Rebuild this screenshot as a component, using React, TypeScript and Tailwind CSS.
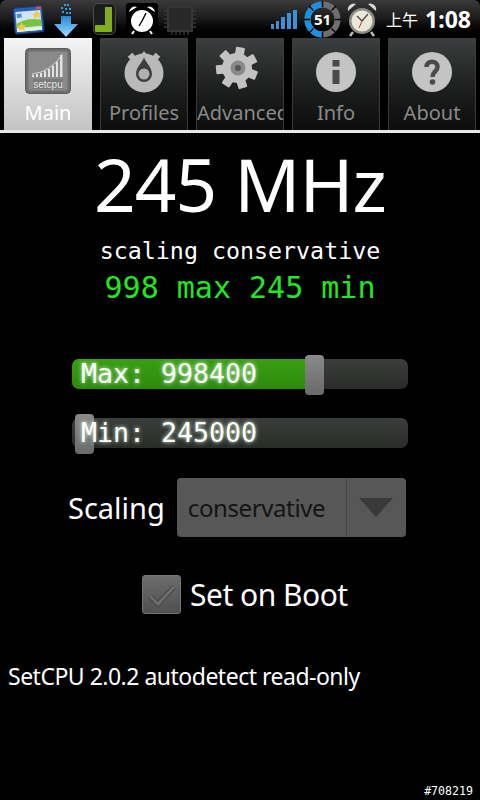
import React from 'react'

const sans = 'font-["Noto_Sans","Open_Sans",sans-serif]'
const mono = 'font-["DejaVu_Sans_Mono","Liberation_Mono",monospace]'

const GalleryIcon = () => (
  <svg width="33" height="33" viewBox="0 0 33 33" className="shrink-0">
    <g transform="rotate(-5 16 16)">
      <rect x="2" y="4" width="29" height="26" rx="2.5" fill="#2a5fb8" stroke="#163a78" />
      <rect x="4" y="8" width="25" height="20" fill="#cfe4f4" />
      <path d="M4 20 Q16 14 29 18 V24 H4 Z" fill="#7cc242" />
      <path d="M4 25 H29 V28 H4 Z" fill="#e8f2d8" />
      <rect x="5" y="10" width="5" height="4" fill="#4f8fd0" />
      <path d="M25 8 l1.5 3 3 .4-2.2 2 .6 3-2.9-1.5-2.9 1.5.6-3-2.2-2 3-.4z" fill="#f3c93c" />
      <path d="M9 19 l1.4 2.8 3 .4-2.2 2.1 .5 3-2.7-1.4-2.7 1.4 .5-3-2.2-2.1 3-.4z" fill="#f3c93c" />
      <rect x="25" y="4.5" width="5" height="2.5" fill="#d9534f" />
    </g>
  </svg>
)

const DownloadIcon = () => (
  <svg width="26" height="36" viewBox="0 0 26 36" className="shrink-0">
    <defs>
      <linearGradient id="dl" x1="0" y1="0" x2="0" y2="1">
        <stop offset="0" stopColor="#1e88d8" />
        <stop offset="1" stopColor="#a6dcff" />
      </linearGradient>
    </defs>
    <g fill="#2f9fe8">
      <rect x="11" y="3" width="2" height="2" />
      <rect x="14" y="3" width="2" height="2" />
      <rect x="8" y="6" width="2" height="2" />
      <rect x="12" y="7" width="2" height="2" />
      <rect x="16" y="7" width="2" height="2" />
      <rect x="9" y="10" width="2" height="2" />
      <rect x="13" y="11" width="2" height="2" />
      <rect x="16" y="11" width="2" height="2" />
    </g>
    <path d="M8 15 H18 V23 H25 L13 36 L1 23 H8 Z" fill="url(#dl)" />
  </svg>
)

const JIcon = () => (
  <svg width="23" height="32" viewBox="0 0 23 32" className="shrink-0">
    <rect x="0.5" y="0.5" width="22" height="31" rx="5" fill="#1c1c1c" stroke="#4a4a4a" />
    <rect x="12" y="4" width="7" height="24" fill="#7fae1f" />
    <rect x="2" y="22" width="17" height="7" rx="1" fill="#7fae1f" />
  </svg>
)

const AlarmWhite = () => (
  <svg width="32" height="32" viewBox="0 0 32 32" className="shrink-0">
    <rect width="32" height="32" rx="3" fill="#000" />
    <circle cx="16" cy="18" r="11" fill="#fff" />
    <path d="M3 9 A6 6 0 0 1 11 4 Z M29 9 A6 6 0 0 0 21 4 Z" fill="#fff" />
    <path d="M16 18 L20 10 M16 18 L13 23" stroke="#000" strokeWidth="1.4" />
    <path d="M8 28 L6 31 M24 28 L26 31" stroke="#fff" strokeWidth="2" />
  </svg>
)

const ChipIcon = () => (
  <svg width="32" height="32" viewBox="0 0 32 32" className="shrink-0">
    <rect x="4" y="4" width="24" height="24" fill="#282828" stroke="#363636" strokeWidth="2" />
    <path
      d="M8 0V4M12 0V4M16 0V4M20 0V4M24 0V4M8 28V32M12 28V32M16 28V32M20 28V32M24 28V32M0 8H4M0 12H4M0 16H4M0 20H4M0 24H4M28 8H32M28 12H32M28 16H32M28 20H32M28 24H32"
      stroke="#363636"
      strokeWidth="1.5"
    />
  </svg>
)

const SignalIcon = () => (
  <div className="flex items-end gap-[2px] h-[20px] shrink-0">
    <div className="w-[3px] h-[5px] bg-[#3d8fd8]" />
    <div className="w-[3px] h-[8px] bg-[#3d8fd8]" />
    <div className="w-[4px] h-[12px] bg-[#3d8fd8]" />
    <div className="w-[4px] h-[16px] bg-[#3d8fd8]" />
    <div className="w-[4px] h-[19px] bg-[#3d8fd8]" />
  </div>
)

const BatteryRing = () => (
  <div className="relative w-[37px] h-[37px] shrink-0 flex items-center justify-center">
    <svg width="37" height="37" viewBox="0 0 37 37" className="absolute inset-0">
      <circle cx="18.5" cy="18.5" r="15" fill="none" stroke="#6e6e6e" strokeWidth="6" />
      <path d="M18.5 3.5 A15 15 0 1 0 18.5 33.5" fill="none" stroke="#1f8fe0" strokeWidth="6" />
      <path d="M18.5 0V6M18.5 31V37M0 18.5H6M31 18.5H37M5 5L9.5 9.5M32 5L27.5 9.5M5 32L9.5 27.5M32 32L27.5 27.5" stroke="#000" strokeWidth="1.4" />
    </svg>
    <span className={`relative text-[15px] font-bold text-white ${sans}`}>51</span>
  </div>
)

const AlarmClock = () => (
  <svg width="32" height="36" viewBox="0 0 32 36" className="shrink-0">
    <path d="M7 31 L4 35 M25 31 L28 35" stroke="#bbb" strokeWidth="2.5" />
    <path d="M2 10 A6 6 0 0 1 10 3 Z M30 10 A6 6 0 0 0 22 3 Z" fill="#d8d8d8" />
    <circle cx="16" cy="20" r="13" fill="#8c8c84" />
    <circle cx="16" cy="20" r="10.5" fill="#ece8d8" />
    <path d="M16 20 L22 13 M16 20 L11 15" stroke="#444" strokeWidth="1.2" />
    <path d="M16 20 L13 27" stroke="#c33" strokeWidth="1" />
  </svg>
)

const SetcpuIcon = () => (
  <svg width="46" height="46" viewBox="0 0 46 46" className="mt-[-3px]">
    <rect x="0.5" y="0.5" width="45" height="45" rx="4" fill="#6e6e6e" stroke="#5a5a5a" />
    <rect x="3" y="3" width="40" height="40" rx="2" fill="#8a8a8a" stroke="#707070" />
    <g fill="#e2e2e2">
      <rect x="7" y="27" width="2" height="2" />
      <rect x="11" y="26" width="2" height="3" />
      <rect x="15" y="25" width="2" height="4" />
      <rect x="19" y="23" width="2" height="6" />
      <rect x="23" y="21" width="2" height="8" />
      <rect x="27" y="18" width="2" height="11" />
      <rect x="31" y="14" width="2" height="15" />
      <rect x="35" y="7" width="2.5" height="22" />
    </g>
    <path d="M7 26 Q26 24 37.5 6" fill="none" stroke="#d8d8d8" strokeWidth="1" />
    <rect x="8" y="31" width="30" height="10" fill="#7a7a7a" />
    <text x="23" y="39.5" textAnchor="middle" fontSize="10" fill="#e4e4e4" fontFamily="Liberation Sans">setcpu</text>
  </svg>
)

const ProfilesIcon = () => (
  <svg width="42" height="44" viewBox="0 0 42 44" className="mt-[-1px]">
    <circle cx="21" cy="23" r="19.5" fill="#b9b9b9" />
    <path d="M21 1 L27 9 H15 Z" fill="#b9b9b9" />
    <g fill="#b9b9b9">
      <rect x="6" y="4" width="6" height="6" transform="rotate(-40 9 7)" />
      <rect x="30" y="4" width="6" height="6" transform="rotate(40 33 7)" />
    </g>
    <path d="M21 7 C20 12 13 17 13 24 A8 8 0 0 0 29 24 C29 17 22 12 21 7 Z" fill="#3e3e3e" />
    <circle cx="21" cy="24" r="5.5" fill="#b0b0b0" />
  </svg>
)

const GearIcon = () => (
  <svg width="44" height="44" viewBox="0 0 44 44" className="mt-[-8px] mr-[6px]">
    <g fill="#c2c2c2">
      <circle cx="22" cy="22" r="15" />
      {[10, 61, 112, 163, 214, 265, 316].map((a) => (
        <rect key={a} x="17.5" y="1" width="9" height="10" rx="1" transform={`rotate(${a} 22 22)`} />
      ))}
    </g>
    <circle cx="23" cy="22" r="7.5" fill="#8a8a8a" />
    <circle cx="23" cy="22" r="3" fill="#555" />
  </svg>
)

const InfoIcon = () => (
  <svg width="40" height="40" viewBox="0 0 40 40">
    <circle cx="20" cy="20" r="20" fill="#c4c4c4" />
    <rect x="16.5" y="8" width="7" height="6.5" fill="#4a4a4a" />
    <rect x="16.5" y="18" width="7" height="14" fill="#4a4a4a" />
  </svg>
)

const HelpIcon = () => (
  <svg width="40" height="40" viewBox="0 0 40 40">
    <circle cx="20" cy="20" r="20" fill="#c4c4c4" />
    <path d="M14.5 15 C14.5 8 25.5 8 25.5 15 C25.5 19.5 20.5 19.5 20.5 25" fill="none" stroke="#4a4a4a" strokeWidth="4.5" />
    <circle cx="20.5" cy="30" r="2.8" fill="#4a4a4a" />
  </svg>
)

const tabs = [
  { label: 'Main', icon: <SetcpuIcon />, active: true },
  { label: 'Profiles', icon: <ProfilesIcon /> },
  { label: 'Advanced', icon: <GearIcon /> },
  { label: 'Info', icon: <InfoIcon /> },
  { label: 'About', icon: <HelpIcon /> },
]

const Slider = ({ label, value, percent, thumb }: { label: string; value: string; percent: number; thumb: number }) => (
  <div className="relative w-[336px] h-[30px] my-[5px] rounded-[7px] bg-gradient-to-b from-[#3a3e3a] to-[#2a2c2a]">
    <div
      className="h-full rounded-[7px] bg-gradient-to-b from-[#3aa012] to-[#2b8a0e]"
      style={{ width: `${percent}px` }}
    />
    <div
      className="absolute top-[-4px] w-[19px] h-[40px] rounded-[4px] bg-gradient-to-b from-[#8a8a8a] to-[#6a6a6a]"
      style={{ left: `${thumb}px` }}
    />
    <span
      className={`absolute left-[9px] top-0 leading-[30px] text-[26.6px] whitespace-pre text-white [text-shadow:0_0_4px_#d8ffd8] ${mono}`}
    >
      {label} {value}
    </span>
  </div>
)

export default function App() {
  return (
    <div className={`w-[480px] h-[800px] bg-black flex flex-col overflow-hidden ${sans}`}>
      <div className="h-[38px] shrink-0 flex items-center rounded-t-[6px] bg-gradient-to-b from-[#3a3a3a] via-[#1a1a1a] to-black">
        <div className="ml-[12px] flex items-center">
          <GalleryIcon />
          <div className="ml-[8px]"><DownloadIcon /></div>
          <div className="ml-[14px]"><JIcon /></div>
          <div className="ml-[10px]"><AlarmWhite /></div>
          <div className="ml-[6px]"><ChipIcon /></div>
        </div>
        <div className="ml-[75px]"><SignalIcon /></div>
        <div className="ml-[7px]"><BatteryRing /></div>
        <div className="ml-[5px]"><AlarmClock /></div>
        <span className='ml-[8px] text-[16px] text-white whitespace-nowrap font-["Noto_Sans_CJK_TC",sans-serif]'>上午</span>
        <span className="ml-[7px] text-[23px] font-bold text-white leading-none whitespace-nowrap">1:08</span>
      </div>

      <div className="h-[92px] shrink-0 flex pl-[4px] gap-[8px] items-stretch">
        {tabs.map((t) => (
          <div
            key={t.label}
            className={
              t.active
                ? 'w-[88px] h-[92px] flex flex-col items-center overflow-hidden bg-gradient-to-b from-[#f4f4f4] to-[#c4c4c4]'
                : 'w-[88px] h-[92px] flex flex-col items-center overflow-hidden border-x border-[#3a3a3a] bg-gradient-to-b from-[#3c3f3f] via-[#202222] to-[#0c0c0c]'
            }
          >
            <div className="h-[68px] flex items-center justify-center shrink-0">{t.icon}</div>
            <div
              className={`mt-[-8px] w-full text-center text-[20px] leading-[30px] whitespace-nowrap ${t.active ? 'text-white' : 'text-[#8a8a8a]'}`}
            >
              {t.label}
            </div>
          </div>
        ))}
      </div>
      <div className="h-[3px] shrink-0 bg-[#e8e8e8]" />

      <div className="flex flex-col items-center">
        <div className="mt-[-1px] text-[73px] tracking-[-1px] leading-[104px] text-white">245 MHz</div>
        <div className={`mt-[1px] text-[23.3px] leading-[28px] text-white ${mono}`}>scaling conservative</div>
        <div className={`mt-[4px] text-[30px] leading-[38px] text-[#22e822] ${mono}`}>998 max 245 min</div>

        <div className="mt-[47px] flex flex-col gap-[19px]">
          <Slider label="Max:" value="998400" percent={240} thumb={233} />
          <Slider label="Min:" value="245000" percent={0} thumb={3} />
        </div>

        <div className="mt-[25px] ml-[68px] self-start flex items-center">
          <span className="text-[29px] text-white leading-none">Scaling</span>
          <div className="ml-[12px] w-[229px] h-[59px] rounded-[4px] bg-[#565756] flex items-center">
            <span className="ml-[11px] flex-1 text-[24px] tracking-[-0.4px] text-[#141414]">conservative</span>
            <div className="w-[60px] h-full border-l border-[#464646] flex items-center justify-center">
              <svg width="34" height="19" viewBox="0 0 34 19">
                <path d="M0 0 H34 L17 19 Z" fill="#3a3a3a" />
              </svg>
            </div>
          </div>
        </div>

        <div className="mt-[38px] ml-[142px] self-start flex items-center">
          <div className="w-[39px] h-[39px] rounded-[3px] border border-[#757575] bg-gradient-to-b from-[#6c6c6c] to-[#505050] flex items-center justify-center">
            <svg width="30" height="26" viewBox="0 0 30 26">
              <path d="M3 14 L11 22 L27 5" fill="none" stroke="#444" strokeWidth="5" />
              <path d="M3 14 L11 22 L27 5" fill="none" stroke="#6c6c6c" strokeWidth="3" />
            </svg>
          </div>
          <span className="ml-[9px] text-[30px] tracking-[-0.5px] text-white leading-none">Set on Boot</span>
        </div>
      </div>

      <div className="mt-[46px] pl-[8px] text-[23px] tracking-[-0.5px] leading-[32px] text-white whitespace-nowrap">
        SetCPU 2.0.2 autodetect read-only
      </div>

      <div className={`mt-auto mb-[2px] mr-[7px] self-end text-[11.6px] leading-[14px] text-white ${mono}`}>#708219</div>
    </div>
  )
}
